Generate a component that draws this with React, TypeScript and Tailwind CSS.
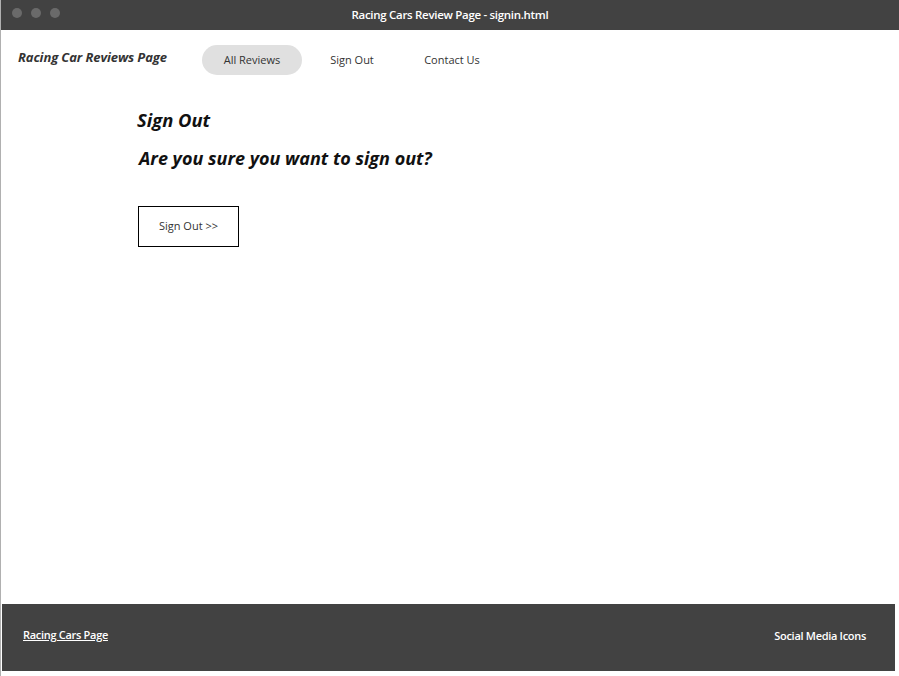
import React from 'react'

const NAV = ['All Reviews', 'Sign Out', 'Contact Us']

export default function App() {
  return (
    <div className="h-[676px] w-[899px] flex flex-col bg-white border-l border-[#b0b0b0] overflow-hidden" style={{ fontFamily: '"Open Sans", sans-serif' }}>
      {/* Window title bar */}
      <div className="h-[30px] shrink-0 bg-[#424242] relative flex items-center justify-center">
        <div className="absolute left-[11px] top-[8px] flex gap-[9px]">
          <span className="w-[10px] h-[10px] rounded-full bg-[#6a6a6a]" />
          <span className="w-[10px] h-[10px] rounded-full bg-[#6a6a6a]" />
          <span className="w-[10px] h-[10px] rounded-full bg-[#6a6a6a]" />
        </div>
        <span className="text-white text-[11.5px] font-semibold tracking-[-0.3px]">Racing Cars Review Page - signin.html</span>
      </div>

      {/* Header nav */}
      <div className="h-[60px] shrink-0 flex items-center pl-[17px]">
        <span className="text-[#333] text-[13px] font-bold italic tracking-[-0.1px] w-[184px] -mt-[4px]">Racing Car Reviews Page</span>
        <nav className="flex items-center">
          {NAV.map((n, i) => (
            <span
              key={n}
              className={`h-[30px] w-[100px] flex items-center justify-center text-[11px] text-[#333] rounded-full ${i === 0 ? 'bg-[#e0e0e0]' : ''}`}
            >
              {n}
            </span>
          ))}
        </nav>
      </div>

      {/* Content */}
      <main className="flex-1 pl-[136px] pt-[18px]">
        <h1 className="text-[18.4px] font-bold italic text-[#111] leading-[24px]">Sign Out</h1>
        <h2 className="mt-[14px] pl-[2px] text-[18px] font-bold italic text-[#111] leading-[24px]">Are you sure you want to sign out?</h2>
        <button className="mt-[36px] ml-[1px] w-[101px] h-[41px] border border-black text-[11px] text-[#333] bg-white">Sign Out &gt;&gt;</button>
      </main>

      {/* Footer */}
      <footer className="h-[67px] shrink-0 mb-[5px] ml-px mr-[4px] bg-[#424242] flex items-center justify-between pl-[21px] pr-[29px] pb-[4px]">
        <a className="text-white text-[11px] font-semibold underline tracking-[-0.3px] -mt-[1px]">Racing Cars Page</a>
        <span className="text-white text-[11px] font-semibold tracking-[-0.3px] mt-[1px]">Social Media Icons</span>
      </footer>
    </div>
  )
}
